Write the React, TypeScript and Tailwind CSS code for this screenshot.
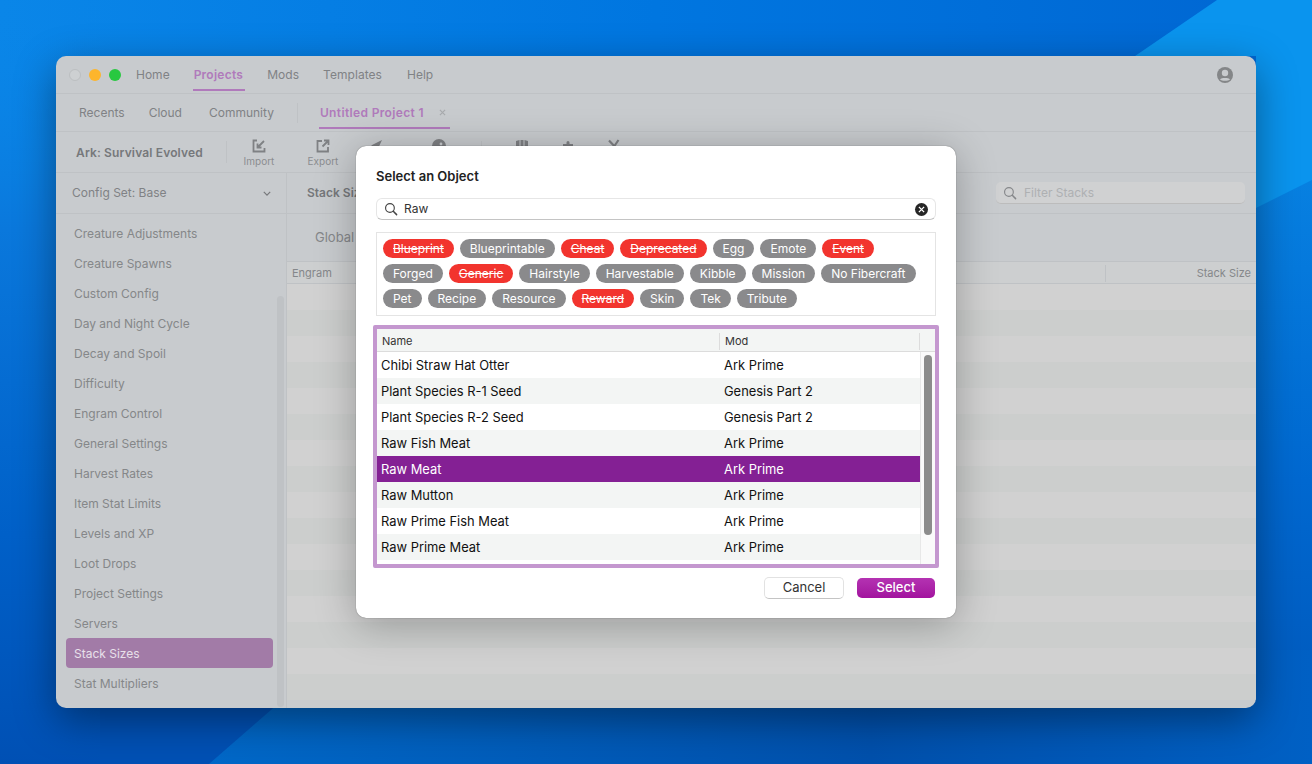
import { ReactNode } from 'react';

const sidebarItems = [
  'Creature Adjustments', 'Creature Spawns', 'Custom Config', 'Day and Night Cycle', 'Decay and Spoil',
  'Difficulty', 'Engram Control', 'General Settings', 'Harvest Rates', 'Item Stat Limits', 'Levels and XP',
  'Loot Drops', 'Project Settings', 'Servers', 'Stack Sizes', 'Stat Multipliers',
];

const tagRows: [string, boolean][][] = [
  [['Blueprint', true], ['Blueprintable', false], ['Cheat', true], ['Deprecated', true], ['Egg', false], ['Emote', false], ['Event', true]],
  [['Forged', false], ['Generic', true], ['Hairstyle', false], ['Harvestable', false], ['Kibble', false], ['Mission', false], ['No Fibercraft', false]],
  [['Pet', false], ['Recipe', false], ['Resource', false], ['Reward', true], ['Skin', false], ['Tek', false], ['Tribute', false]],
];

const objects = [
  ['Chibi Straw Hat Otter', 'Ark Prime'],
  ['Plant Species R-1 Seed', 'Genesis Part 2'],
  ['Plant Species R-2 Seed', 'Genesis Part 2'],
  ['Raw Fish Meat', 'Ark Prime'],
  ['Raw Meat', 'Ark Prime'],
  ['Raw Mutton', 'Ark Prime'],
  ['Raw Prime Fish Meat', 'Ark Prime'],
  ['Raw Prime Meat', 'Ark Prime'],
];

function SearchIcon({ className }: { className: string }) {
  return (
    <svg viewBox="0 0 16 16" className={className} fill="none" stroke="currentColor" strokeWidth="1.3">
      <circle cx="6.8" cy="6.8" r="5" />
      <path d="M10.6 10.6 14.4 14.4" strokeWidth="1.7" strokeLinecap="round" />
    </svg>
  );
}

function Wallpaper() {
  return (
    <svg viewBox="0 0 1312 764" className="absolute inset-0 w-[1312px] h-[764px]">
      <defs>
        <linearGradient id="wallTop" x1="0" y1="0" x2="1" y2="0">
          <stop offset="0" stopColor="#0a86e8" />
          <stop offset="0.5" stopColor="#0076e0" />
          <stop offset="1" stopColor="#0066d2" />
        </linearGradient>
        <linearGradient id="wallLeft" x1="0" y1="0" x2="0" y2="1">
          <stop offset="0" stopColor="#0a86e8" stopOpacity="0" />
          <stop offset="0.3" stopColor="#0a78dc" />
          <stop offset="0.7" stopColor="#0060c8" />
          <stop offset="1" stopColor="#0050b4" />
        </linearGradient>
        <linearGradient id="wallRight" x1="0" y1="0" x2="0" y2="1">
          <stop offset="0" stopColor="#0a8ae8" />
          <stop offset="0.6" stopColor="#0068d0" />
          <stop offset="1" stopColor="#0056b8" />
        </linearGradient>
        <linearGradient id="wallBottom" x1="0" y1="0" x2="1" y2="0">
          <stop offset="0" stopColor="#0068c8" />
          <stop offset="0.6" stopColor="#0050ac" />
          <stop offset="1" stopColor="#0060c4" />
        </linearGradient>
      </defs>
      <rect width="1312" height="764" fill="url(#wallTop)" />
      <rect width="100" height="764" fill="url(#wallLeft)" />
      <rect x="100" y="600" width="400" height="164" fill="#0050b4" />
      <rect x="1256" y="56" width="56" height="708" fill="url(#wallRight)" />
      <polygon points="340,650 1312,650 1312,764 209,764" fill="url(#wallBottom)" />
      <polygon points="1217,0 1312,0 1312,180 1256,208 1256,56 1135,56" fill="#0a94ee" />
    </svg>
  );
}

function Tag({ label, off }: { label: string; off: boolean }) {
  return (
    <span className={`h-[19px] px-[10px] rounded-full text-[12px] leading-[19px] text-white whitespace-nowrap ${off ? 'bg-[#f2342e] line-through' : 'bg-[#8a8a8c]'}`}>
      {label}
    </span>
  );
}

function ToolbarItem({ label, className = '', children }: { label?: string; className?: string; children: ReactNode }) {
  return (
    <div className={`w-[64px] shrink-0 flex flex-col items-center self-start pt-[7px] ${className}`}>
      <svg viewBox="0 0 14 14" className="w-[14px] h-[14px]" fill="none" stroke="#7f8184" strokeWidth="1.8">
        {children}
      </svg>
      {label && <span className="text-[10px] leading-[12px] mt-[2px] text-[#8b8d90]">{label}</span>}
    </div>
  );
}

function Modal() {
  return (
    <div className="absolute left-[300px] top-[90px] w-[600px] h-[472px] bg-white rounded-[10px] shadow-[0_0_1px_rgba(0,0,0,0.6),0_6px_40px_rgba(0,0,0,0.28)] px-[20px] pt-[22px] text-[#222]">
      <h2 className="text-[13px] leading-[16px] font-semibold">Select an Object</h2>
      <div className="mt-[14px] h-[22px] flex items-center rounded-[6px] border border-[#e6e6e6] border-b-[#c4c4c4] pl-[7px] pr-[7px]">
        <SearchIcon className="w-[14px] h-[14px] text-[#444]" />
        <span className="ml-[6px] flex-1 text-[12px] text-[#333]">Raw</span>
        <span className="w-[13px] h-[13px] rounded-full bg-[#262626] flex items-center justify-center">
          <svg viewBox="0 0 8 8" className="w-[7px] h-[7px]" stroke="#fff" strokeWidth="1.5"><path d="M1 1 7 7M7 1 1 7" /></svg>
        </span>
      </div>
      <div className="mt-[12px] h-[84px] border border-[#e4e4e4] pl-[6px] pt-[6px] flex flex-col gap-[6px]">
        {tagRows.map((row, i) => (
          <div key={i} className="flex gap-[6px]">
            {row.map(([label, off]) => <Tag key={label} label={label} off={off} />)}
          </div>
        ))}
      </div>
      <div className="relative mt-[9px] -mx-[3px] h-[243px] border-4 border-[#c497cf] rounded-[2px] overflow-hidden">
        <div className="h-[23px] flex items-center pt-[2px] bg-[#f3f5f4] border-b border-[#dcdcdc] text-[11px] text-[#333]">
          <div className="w-[343px] pl-[5px] h-[17px] leading-[17px] border-r border-[#dcdcdc]">Name</div>
          <div className="w-[200px] pl-[5px] h-[17px] leading-[17px] border-r border-[#dcdcdc]">Mod</div>
        </div>
        {objects.map(([name, mod], i) => (
          <div
            key={name}
            className={`w-[543px] h-[26px] flex items-center pt-[2px] text-[12.9px] ${i === 4 ? 'bg-[#842094] text-white' : i % 2 === 1 ? 'bg-[#f3f5f4] text-[#111]' : 'bg-white text-[#111]'}`}
          >
            <div className="w-[343px] pl-[4px]">{name}</div>
            <div className="pl-[4px]">{mod}</div>
          </div>
        ))}
        <div className="absolute right-0 top-[23px] bottom-0 w-[15px] bg-[#fafafa] border-l border-[#e8e8e8]">
          <div className="ml-[3px] mt-[3px] w-[8px] h-[180px] rounded-full bg-[#8c8c8c]" />
        </div>
      </div>
      <div className="mt-[9px] pr-[1px] flex justify-end items-center gap-[13px]">
        <button className="w-[80px] h-[22px] pb-[2px] rounded-[5px] bg-white border border-[#e2e2e2] border-b-[#c4c4c4] text-[13px] leading-[18px] text-[#333]">Cancel</button>
        <button className="w-[78px] h-[20px] pb-[2px] rounded-[5px] bg-gradient-to-b from-[#b432b2] to-[#a2129e] text-[13px] leading-[18px] font-medium text-white">Select</button>
      </div>
    </div>
  );
}

export default function App() {
  return (
    <div className="relative w-[1312px] h-[764px] overflow-hidden pl-[56px] pt-[56px] font-['Inter',sans-serif]">
      <Wallpaper />
      <div className="relative w-[1200px] h-[652px] rounded-[10px] overflow-hidden bg-[#c8cbce] flex flex-col shadow-[0_12px_40px_rgba(0,0,0,0.4)] text-[12px] text-[#808285]">
        <div className="h-[38px] shrink-0 border-b border-[#bfc2c5] flex items-center pl-[13px] pr-[23px]">
          <div className="flex gap-[8px]">
            <span className="w-[12px] h-[12px] rounded-full border border-[#bcbfc1] bg-[#cdd0d2]" />
            <span className="w-[12px] h-[12px] rounded-full bg-[#fdb52c]" />
            <span className="w-[12px] h-[12px] rounded-full bg-[#28c840]" />
          </div>
          <div className="ml-[15px] flex gap-[24px] h-full items-center">
            <span>Home</span>
            <span className="relative font-semibold text-[#b07abb] tracking-[0.25px]">
              Projects
              <span className="absolute -left-[1px] -right-[2px] top-[23px] h-[2px] bg-[#b07abb]" />
            </span>
            <span className="tracking-[0.05px]">Mods</span>
            <span className="tracking-[0.05px]">Templates</span>
            <span className="ml-[1px]">Help</span>
          </div>
          <svg viewBox="0 0 16 16" className="ml-auto w-[16px] h-[16px]">
            <circle cx="8" cy="8" r="8" fill="#848688" />
            <circle cx="8" cy="6" r="3.2" fill="#c8cbce" />
            <path d="M3 12.4C4.5 10.600 11.500 10.600 13 12.4 11.500 14.200 4.500 14.200 3 12.400Z" fill="#c8cbce" />
          </svg>
        </div>

        <div className="h-[38px] shrink-0 border-b border-[#bfc2c5] flex items-center pl-[23px]">
          <span>Recents</span>
          <span className="ml-[24px]">Cloud</span>
          <span className="ml-[27px]">Community</span>
          <span className="ml-[23px] w-px h-[20px] bg-[#bfc2c5]" />
          <span className="relative ml-[22px] font-semibold text-[#b07abb] tracking-[0.35px]">
            Untitled Project 1
            <span className="absolute -left-[1px] -right-[26px] top-[23px] h-[2px] bg-[#b07abb]" />
          </span>
          <svg viewBox="0 0 8 8" className="ml-[15px] w-[7px] h-[7px]" stroke="#a8aaad" strokeWidth="1.3"><path d="M1 1 7 7M7 1 1 7" /></svg>
        </div>

        <div className="h-[41px] shrink-0 border-b border-[#bfc2c5] flex items-center pl-[20px]">
          <span className="font-semibold text-[#76787b] w-[150px] pt-[2px] tracking-[0.15px]">Ark: Survival Evolved</span>
          <span className="w-px h-[22px] bg-[#bfc2c5]" />
          <ToolbarItem label="Import">
            <path d="M5 1.500H1.500V12.500H12.500V9M12 2 5.500 8.500M5.500 4.500V8.500H9.500" />
          </ToolbarItem>
          <ToolbarItem label="Export">
            <path d="M6 2H1.500V12.500H12V8M8 1.500H12.500V6M12.500 1.500 6.500 7.500" />
          </ToolbarItem>
          <ToolbarItem className="-ml-[11px]">
            <path d="M13 1 2 6.500 6 8 7.500 13Z" fill="#7f8184" stroke="none" />
          </ToolbarItem>
          <ToolbarItem className="-ml-[1px]">
            <circle cx="7" cy="7" r="7" fill="#7f8184" stroke="none" />
            <circle cx="9" cy="5" r="1.400" fill="#c8cbce" stroke="none" />
          </ToolbarItem>
          <span className="ml-[10px] w-px h-[22px] bg-[#bfc2c5]" />
          <ToolbarItem className="ml-[8px]">
            <path d="M1 2 4.500 1V12H1ZM5.500 1H8.500V12H5.500ZM9.500 1 13 2V12H9.500Z" fill="#7f8184" stroke="none" />
          </ToolbarItem>
          <ToolbarItem className="-ml-[18px]">
            <path d="M2 5H5.500V3.500A1.500 1.500 0 1 1 8.500 3.500V5H12V13H2Z" fill="#7f8184" stroke="none" />
          </ToolbarItem>
          <ToolbarItem className="-ml-[18px]">
            <path d="M2 1.500 12 12M11.500 1 4 12" strokeWidth="2.2" />
          </ToolbarItem>
        </div>

        <div className="flex-1 flex min-h-0">
          <div className="relative w-[231px] shrink-0 border-r border-[#bfc2c5]">
            <div className="h-[41px] border-b border-[#bfc2c5] flex items-center justify-between pl-[16px] pr-[15px]">
              <span>Config Set: Base</span>
              <svg viewBox="0 0 10 6" className="w-[8px] h-[5px]" fill="none" stroke="#76787b" strokeWidth="1.5"><path d="M1 1 5 5 9 1" /></svg>
            </div>
            <div className="pt-[4px] pl-[10px] pr-[13px]">
              {sidebarItems.map((item) => (
                <div
                  key={item}
                  className={`h-[30px] flex items-center pt-[2px] pl-[8px] rounded-[4px] ${item === 'Stack Sizes' ? 'bg-[#a27ba7] text-[#e8e0ea]' : 'text-[#858789]'}`}
                >
                  {item}
                </div>
              ))}
            </div>
            <div className="absolute right-[2px] top-[123px] bottom-[1px] w-[7px] rounded-full bg-[#bfc2c5]" />
          </div>

          <div className="flex-1 flex flex-col min-w-0">
            <div className="h-[41px] shrink-0 border-b border-[#bfc2c5] flex items-center justify-between pl-[20px] pr-[11px]">
              <span className="font-semibold text-[#76787b]">Stack Sizes</span>
              <div className="w-[249px] h-[22px] rounded-[5px] bg-[#d0d1d2] border-b border-[#bcbcbc] flex items-center pl-[7px] text-[#aeb0b2]">
                <SearchIcon className="w-[14px] h-[14px] text-[#85878a]" />
                <span className="ml-[7px]">Filter Stacks</span>
              </div>
            </div>
            <div className="h-[47px] shrink-0 flex items-center pl-[28px] text-[13px] text-[#85878a]">Global</div>
            <div className="h-[23px] shrink-0 bg-[#cdcfd0] border-y border-[#bfc2c5] flex items-center pt-[2px] text-[11px] text-[#85878a]">
              <div className="w-[818px] pl-[5px]">Engram</div>
              <div className="flex-1 h-[17px] border-l border-[#bfc2c5] text-right pr-[5px] leading-[17px]">Stack Size</div>
            </div>
            <div className="flex-1 overflow-hidden">
              {Array.from({ length: 16 }).map((_, i) => (
                <div key={i} className={`h-[26px] ${i % 2 === 1 ? 'bg-[#cccecd]' : 'bg-[#d1d1d1]'}`} />
              ))}
            </div>
          </div>
        </div>

        <Modal />
      </div>
    </div>
  );
}
